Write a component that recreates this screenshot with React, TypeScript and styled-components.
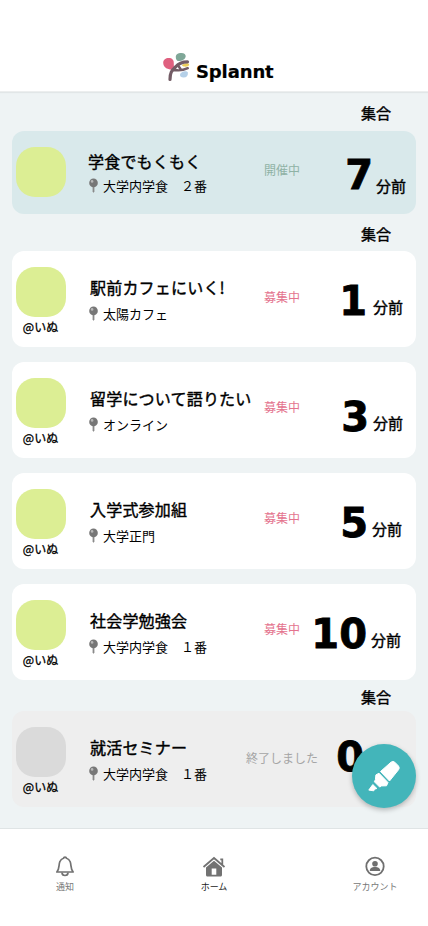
import React from "react";
import styled, { createGlobalStyle } from "styled-components";

const GlobalStyle = createGlobalStyle`
  * { box-sizing: border-box; }
  body {
    margin: 0;
    background: #fff;
    color: #000;
    font-family: "Noto Sans CJK JP", sans-serif;
  }
`;

const Screen = styled.div`
  height: 926px;
  display: flex;
  flex-direction: column;
  overflow: hidden;
`;

const Header = styled.header`
  height: 92px;
  flex: none;
  display: flex;
  align-items: flex-start;
  padding: 51px 0 0 161px;
  border-bottom: 1px solid #eceeee;
  box-shadow: 0 1px 1px rgba(0, 0, 0, 0.05);
  z-index: 1;
`;

const Brand = styled.h1`
  margin: 9px 0 0 3px;
  font: bold 18px/24px "DejaVu Sans", sans-serif;
  letter-spacing: -0.12px;
  -webkit-text-stroke: 0.2px;
`;

const Main = styled.main`
  height: 736px;
  flex: none;
  padding: 0 12px;
  background: #eef3f4;
`;

const SectionLabel = styled.h2<{ $height: number; $top: number }>`
  height: ${(p) => p.$height}px;
  margin: 0;
  padding: ${(p) => p.$top}px 25px 0 0;
  text-align: right;
  font-size: 15px;
  font-weight: 400;
  line-height: 20px;
  -webkit-text-stroke: 0.4px;
`;

const CardList = styled.div`
  display: grid;
  grid-template-columns: minmax(0, 1fr);
  gap: 15px;
`;

type Tone = "active" | "open" | "closed";
const surfaces: Record<Tone, string> = { active: "#d9e9eb", open: "#fff", closed: "#eee" };
const statusColors: Record<Tone, string> = { active: "#8fb2a5", open: "#e4738e", closed: "#a5a5a5" };

const Card = styled.article<{ $tone: Tone }>`
  height: ${(p) => (p.$tone === "active" ? 83 : 96)}px;
  display: grid;
  grid-template-columns: 58px 18px 150px 72px minmax(0, 1fr);
  border-radius: 12px;
  background: ${(p) => surfaces[p.$tone]};
`;

const Owner = styled.div`
  padding: 16px 0 0 4px;
  font-size: 12px;
  line-height: 20px;
  text-align: center;
  -webkit-text-stroke: 0.3px;
`;

const Avatar = styled.div<{ $muted: boolean }>`
  width: 50px;
  height: 50px;
  border-radius: 19px;
  background: ${(p) => (p.$muted ? "#dadada" : "#dcee94")};
`;

const OwnerName = styled.div`
  width: 49px;
  white-space: nowrap;
`;

const Info = styled.div<{ $active: boolean }>`
  grid-column: 3;
  padding-top: ${(p) => (p.$active ? 18 : 24)}px;
  white-space: nowrap;
`;

const Title = styled.h3<{ $active: boolean }>`
  margin: 0 0 ${(p) => (p.$active ? 1 : 3)}px ${(p) => (p.$active ? 0 : 2)}px;
  font-size: 16px;
  font-weight: 400;
  line-height: 24px;
  letter-spacing: 0.2px;
  -webkit-text-stroke: 0.4px;
`;

const Place = styled.div`
  display: flex;
  align-items: center;
  height: 22px;
  font-size: 13px;
  white-space: pre;
  svg { margin: 2px 5px 0 1px; }
`;

const Status = styled.div<{ $tone: Tone; $top: number }>`
  padding-top: ${(p) => p.$top - 10}px;
  width: 88px;
  text-align: center;
  font-size: 12px;
  line-height: 20px;
  color: ${(p) => statusColors[p.$tone]};
`;

const Time = styled.div<{ $top: number; $right: number; $gap: number }>`
  display: flex;
  align-items: baseline;
  justify-content: flex-end;
  gap: ${(p) => p.$gap}px;
  height: 48px;
  margin-top: ${(p) => p.$top}px;
  padding-right: ${(p) => p.$right}px;
  white-space: nowrap;
`;

const Minutes = styled.strong`
  font: bold 40px/48px "DejaVu Sans", sans-serif;
  -webkit-text-stroke: 0.8px;
`;

const Unit = styled.span<{ $drop: number }>`
  font-size: 15px;
  line-height: 20px;
  transform: translateY(${(p) => p.$drop}px);
  -webkit-text-stroke: 0.4px;
`;

const Footer = styled.nav`
  height: 98px;
  flex: none;
  display: grid;
  grid-template-columns: 149px 161px 60px;
  align-items: start;
  padding: 25px 0 0 35px;
  border-top: 1px solid #dfe4e5;
`;

const Tab = styled.a<{ $current?: boolean }>`
  width: 60px;
  display: flex;
  flex-direction: column;
  align-items: center;
  font-size: 9px;
  line-height: 14px;
  white-space: nowrap;
  color: ${(p) => (p.$current ? "#222" : "#777")};
  svg { display: block; margin-bottom: 2px; }
`;

const Compose = styled.button`
  position: fixed;
  left: 352px;
  top: 744px;
  width: 64px;
  height: 64px;
  padding: 0;
  border: 0;
  border-radius: 50%;
  background: #43b5ba;
  box-shadow: 0 2px 5px rgba(0, 0, 0, 0.25);
  z-index: 2;
  svg { display: block; }
`;

const Logo = () => (
  <svg width="32" height="32" viewBox="0 0 32 32">
    <path d="M2.2 12c0-3.3 2.6-5 5.4-5 3.6 0 5.4 2 5.2 5.2 0 2.4.3 4.4.2 5.7-1 1-3.4.9-5.6.2-3.2-.9-5.2-3.1-5.2-6.1z" fill="#df607f" />
    <path d="M14.8 6c0-2.6 2.4-4 5.2-4 3-.2 5 1.4 4.7 3.5-.6 3.2-4.3 4.9-8 4.5-1.4-.8-1.9-2.3-1.9-4z" fill="#7fa798" />
    <path d="M20.8 14.5c2-2.8 7.4-2.8 7.4-.8s-5 2.8-7.4.8z" fill="#edcf5c" />
    <path d="M19 23.8c.4-3.4 7.6-5 7.9-2 .2 3-1.4 4.8-4.4 4.7-2.5-.1-3.5-1-3.5-2.7z" fill="#b5d0e8" />
    <g fill="none" stroke="#735c65" strokeLinecap="round">
      <path d="M9 28.5c0-7 1.5-8.5 5.5-12.5 3.2-4 6-5.2 12-5.2" strokeWidth="3.2" />
      <path d="M13.5 19.2c4.5 0 6.5 1.2 13.3-2M16.8 14l3 4.5" strokeWidth="2.4" />
    </g>
  </svg>
);

const Pin = () => (
  <svg width="9" height="16" viewBox="0 0 9 16">
    <path d="M3.6 8h1.8v5.2l-.9 1.7-.9-1.7z" fill="#8a8a8a" />
    <circle cx="4.5" cy="4.9" r="4.3" fill="#777" />
    <circle cx="3.1" cy="3.4" r="1.3" fill="#b8b8b8" />
  </svg>
);

const Bell = () => (
  <svg width="20" height="24" viewBox="0 0 20 24" fill="none" stroke="#727272" strokeWidth="1.7" strokeLinejoin="round">
    <path d="M1.8 18c3-3 1.7-7 3-10.2C5.7 5.5 7.3 4.5 8.5 4.2c.3-1.4 2.7-1.4 3 0 1.2.3 2.8 1.3 3.7 3.6 1.3 3.2 0 7.2 3 10.2z" />
    <path d="M7 18.5c0 4 6 4 6 0" />
  </svg>
);

const Home = () => (
  <svg width="24" height="24" viewBox="0 0 24 24">
    <path d="M1.5 13L12 4l10.5 9M18.3 5.4h2v5.5" fill="none" stroke="#727272" strokeWidth="1.8" />
    <path fill="#727272" fillRule="evenodd" d="M12 6.8l8 6.8v7.3c0 .8-.6 1.5-1.5 1.5h-13c-.9 0-1.5-.7-1.5-1.5v-7.3zM9.7 14.4v6.4h4.6v-6.4z" />
  </svg>
);

const Account = () => (
  <svg width="22" height="24" viewBox="0 0 22 24">
    <circle cx="11" cy="12.4" r="8.7" fill="none" stroke="#707070" strokeWidth="1.8" />
    <circle cx="11" cy="9.7" r="2.8" fill="#707070" />
    <path d="M5.8 17.1c0-3 2-4 5.2-4s5.2 1 5.2 4z" fill="#707070" />
  </svg>
);

const Marker = () => (
  <svg width="64" height="64" viewBox="0 0 64 64">
    <g fill="#fff" stroke="#fff" strokeWidth="1" strokeLinejoin="round">
      <path d="M28.5 27.5L39 18.2q2-1.6 3.8 0l3.7 3.8q1.5 2 0 3.8L37.5 37z" />
      <path d="M27 29.2L36 38.6l-1.5 3.2-5 .1-1.8 1.2-5.3-5.3 1-2.2.5-4.7z" />
      <path d="M20.8 40.5l4.1 4-2.4.7-.7 1.6-5-.7z" />
    </g>
  </svg>
);

interface Event {
  title: string;
  place: string;
  status: string;
  tone: Tone;
  statusY: number;
  minutes: number;
  baseline: number;
  right: number;
  gap: number;
}

const live: Event = { title: "学食でもくもく", place: "大学内学食　２番", status: "開催中", tone: "active", statusY: 39, minutes: 7, baseline: 58, right: 10, gap: 3 };
const upcoming: Event[] = [
  { title: "駅前カフェにいく!", place: "太陽カフェ", status: "募集中", tone: "open", statusY: 46, minutes: 1, baseline: 64, right: 13, gap: 6 },
  { title: "留学について語りたい", place: "オンライン", status: "募集中", tone: "open", statusY: 45, minutes: 3, baseline: 69, right: 13, gap: 4 },
  { title: "入学式参加組", place: "大学正門", status: "募集中", tone: "open", statusY: 45, minutes: 5, baseline: 64, right: 14, gap: 4 },
  { title: "社会学勉強会", place: "大学内学食　１番", status: "募集中", tone: "open", statusY: 45, minutes: 10, baseline: 64, right: 15, gap: 4 },
];
const finished: Event = { title: "就活セミナー", place: "大学内学食　１番", status: "終了しました", tone: "closed", statusY: 47, minutes: 0, baseline: 60, right: 18, gap: 4 };

const EventCard = ({ event }: { event: Event }) => {
  const active = event.tone === "active";
  return (
    <Card $tone={event.tone}>
      <Owner>
        <Avatar $muted={event.tone === "closed"} />
        {!active && <OwnerName>@いぬ</OwnerName>}
      </Owner>
      <Info $active={active}>
        <Title $active={active}>{event.title}</Title>
        <Place><Pin />{event.place}</Place>
      </Info>
      <Status $tone={event.tone} $top={event.statusY}>{event.status}</Status>
      <Time $top={event.baseline - 38} $right={event.right} $gap={event.gap}>
        <Minutes>{event.minutes}</Minutes>
        <Unit $drop={active ? 3 : -2}>分前</Unit>
      </Time>
    </Card>
  );
};

export default function App() {
  return (
    <Screen>
      <GlobalStyle />
      <Header><Logo /><Brand>Splannt</Brand></Header>
      <Main>
        <SectionLabel $height={39} $top={11}>集合</SectionLabel>
        <EventCard event={live} />
        <SectionLabel $height={37} $top={10}>集合</SectionLabel>
        <CardList>{upcoming.map((e) => <EventCard key={e.title} event={e} />)}</CardList>
        <SectionLabel $height={31} $top={7}>集合</SectionLabel>
        <EventCard event={finished} />
      </Main>
      <Footer>
        <Tab><Bell />通知</Tab>
        <Tab $current><Home />ホーム</Tab>
        <Tab><Account />アカウント</Tab>
      </Footer>
      <Compose aria-label="作成"><Marker /></Compose>
    </Screen>
  );
}
